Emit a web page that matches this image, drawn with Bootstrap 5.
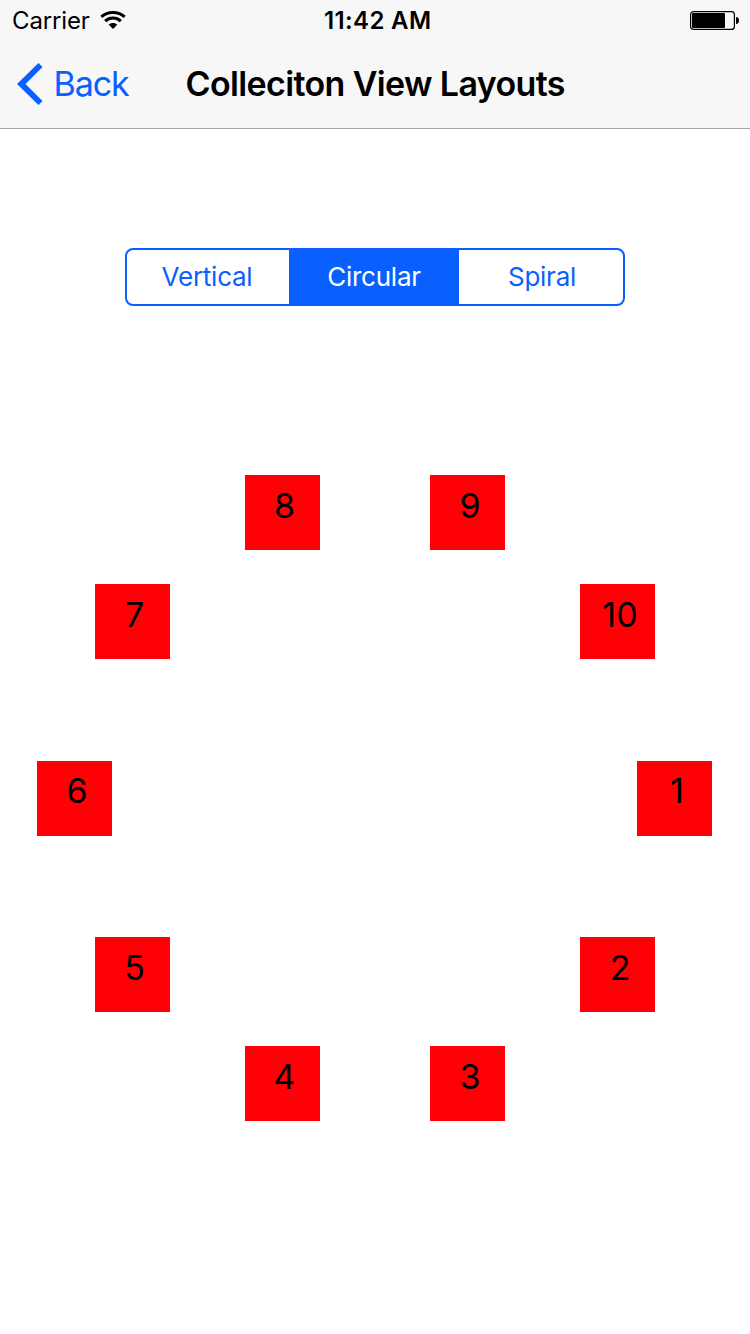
<!DOCTYPE html>
<html lang="en">
<head>
<meta charset="utf-8">
<meta name="viewport" content="width=device-width, initial-scale=1">
<title>Colleciton View Layouts</title>
<link href="https://cdn.jsdelivr.net/npm/bootstrap@5.3.0/dist/css/bootstrap.min.css" rel="stylesheet">
<style>
  :root { --tint: #0a60ff; }
  body { font-family: Inter, "Liberation Sans", sans-serif; color: #000; height: 1334px; overflow: hidden; }
  .top-area { background: #f7f7f7; border-bottom: 1px solid #a7a7aa; height: 129px; }
  .status-row { height: 40px; font-size: 24px; line-height: 38px; padding: 0 11px 0 12px; }
  .status-row .side { width: 240px; }
  .carrier, .clock { padding-top: 2px; }
  .carrier { letter-spacing: -.15px; width: 87.5px; }
  .clock { letter-spacing: .35px; padding-left: 4.5px; }
  .title-row { height: 88px; line-height: 88px; padding-left: 16.5px; }
  .back-link { width: 169px; color: var(--tint); font-size: 34px; letter-spacing: -1.05px; gap: 11px; }
  .page-title { font-size: 34px; letter-spacing: -.63px; line-height: 88px; }
  .segments { width: 500px; height: 58px; margin-top: 119px; border: 2px solid var(--tint); border-radius: 8px; }
  .segments .btn { --bs-btn-color: var(--tint); --bs-btn-active-bg: var(--tint); --bs-btn-active-color: #fff;
    border: 0; padding: 0; font-size: 26px; line-height: 54px; letter-spacing: -.25px; flex: 0 0 auto; }
  .seg-a { width: 162px; } .seg-b { width: 170px; } .seg-c { width: 164px; }
  .segments .seg-a { padding-right: 2px; }
  .segments .seg-b { margin: -2px 0; }
  .segments .seg-c { padding-left: 2px; }
  .circle-canvas { height: 1028px; }
  .tile { width: 75px; height: 75px; background: #ff0007; font-size: 34px; line-height: 62px; padding-left: 4px; }
  .tile-mid { line-height: 60px; padding-left: 5px; }
  .tile-east { padding-left: 5px; }
</style>
</head>
<body>
<header class="top-area">
  <div class="status-row d-flex align-items-center justify-content-between">
    <div class="side d-flex align-items-center">
      <span class="carrier">Carrier</span>
      <svg width="26" height="20" viewBox="0 0 26 20">
        <g fill="none" stroke="#000" stroke-width="3">
          <path d="M1.3 6.9C7.7.9 18.3.9 24.7 6.9"/>
          <path d="M5.2 11.1c4.3-4 11.3-4 15.6 0"/>
        </g>
        <path d="M8.6 14.6c2.5-2.2 6.3-2.2 8.8 0L13 19z"/>
      </svg>
    </div>
    <span class="clock fw-semibold">11:42 AM</span>
    <div class="side d-flex justify-content-end">
      <svg width="49" height="20" viewBox="0 0 49 20">
        <rect x=".6" y="1.6" width="43.8" height="17.8" rx="3" fill="none" stroke="#000" stroke-width="1.2"/>
        <rect x="2" y="3" width="33" height="15" rx="1"/>
        <path d="M46 7q3 .3 3 3.5T46 14z"/>
      </svg>
    </div>
  </div>
  <nav class="title-row d-flex align-items-center">
    <a class="back-link d-flex align-items-center text-decoration-none" href="#">
      <svg width="26" height="42" viewBox="0 0 26 42"><path fill="#0a60ff" d="M21.5 0 25.5 4 8.5 21l17 17-4 4L0 21z"/></svg>
      <span class="back-text">Back</span>
    </a>
    <h1 class="page-title fw-semibold mb-0 text-nowrap">Colleciton View Layouts</h1>
  </nav>
</header>
<main>
  <div class="segments d-flex mx-auto" role="group">
    <button class="btn seg-a rounded-0">Vertical</button>
    <button class="btn seg-b rounded-0 active">Circular</button>
    <button class="btn seg-c rounded-0">Spiral</button>
  </div>
  <!-- Tiles placed around a circle on a free canvas -->
  <div class="circle-canvas position-relative">
    <div class="tile tile-mid position-absolute text-center" style="left:637px;top:455px">1</div>
    <div class="tile tile-east position-absolute text-center" style="left:580px;top:631px">2</div>
    <div class="tile tile-east position-absolute text-center" style="left:430px;top:740px">3</div>
    <div class="tile position-absolute text-center" style="left:245px;top:740px">4</div>
    <div class="tile position-absolute text-center" style="left:95px;top:631px">5</div>
    <div class="tile tile-mid position-absolute text-center" style="left:37px;top:455px">6</div>
    <div class="tile position-absolute text-center" style="left:95px;top:278px">7</div>
    <div class="tile position-absolute text-center" style="left:245px;top:169px">8</div>
    <div class="tile tile-east position-absolute text-center" style="left:430px;top:169px">9</div>
    <div class="tile tile-east position-absolute text-center" style="left:580px;top:278px">10</div>
  </div>
</main>
<script src="https://cdn.jsdelivr.net/npm/bootstrap@5.3.0/dist/js/bootstrap.bundle.min.js"></script>
</body>
</html>
